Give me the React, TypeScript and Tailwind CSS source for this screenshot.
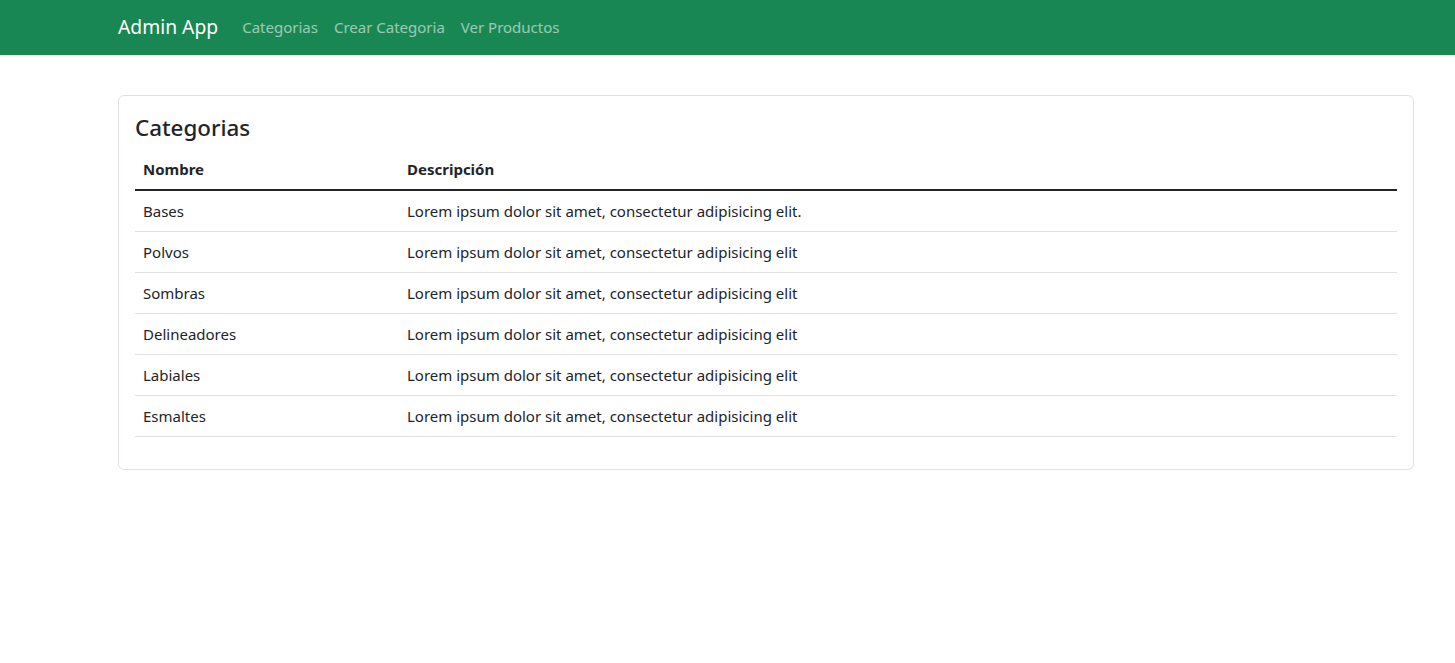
const categorias = [
  { nombre: "Bases", descripcion: "Lorem ipsum dolor sit amet, consectetur adipisicing elit." },
  { nombre: "Polvos", descripcion: "Lorem ipsum dolor sit amet, consectetur adipisicing elit" },
  { nombre: "Sombras", descripcion: "Lorem ipsum dolor sit amet, consectetur adipisicing elit" },
  { nombre: "Delineadores", descripcion: "Lorem ipsum dolor sit amet, consectetur adipisicing elit" },
  { nombre: "Labiales", descripcion: "Lorem ipsum dolor sit amet, consectetur adipisicing elit" },
  { nombre: "Esmaltes", descripcion: "Lorem ipsum dolor sit amet, consectetur adipisicing elit" },
];

export default function App() {
  return (
    <div className="min-h-screen bg-white text-[#212529] font-['Noto_Sans',sans-serif] text-[15px]">
      <nav className="bg-[#198754] h-[55px] flex items-center pl-[118px]">
        <span className="text-white text-[19.3px] mr-4">Admin App</span>
        <a className="px-2 text-white/55">Categorias</a>
        <a className="px-2 text-white/55">Crear Categoria</a>
        <a className="px-2 text-white/55">Ver Productos</a>
      </nav>

      <main className="pl-[118px] pr-[41px] pt-10">
        <div className="border border-[#dee2e6] rounded-md p-4">
          <h4 className="text-[22.4px] font-medium leading-[32px] mb-[5px]">Categorias</h4>
          <table className="w-full mb-4 border-collapse">
            <thead>
              <tr className="border-b-2 border-[#212529]">
                <th className="w-[264px] text-left font-bold px-2 py-2 leading-6">Nombre</th>
                <th className="text-left font-bold px-2 py-2 leading-6">Descripción</th>
              </tr>
            </thead>
            <tbody>
              {categorias.map((c) => (
                <tr key={c.nombre} className="border-b border-[#dee2e6]">
                  <td className="px-2 py-2 leading-6">{c.nombre}</td>
                  <td className="px-2 py-2 leading-6">{c.descripcion}</td>
                </tr>
              ))}
            </tbody>
          </table>
        </div>
      </main>
    </div>
  );
}
